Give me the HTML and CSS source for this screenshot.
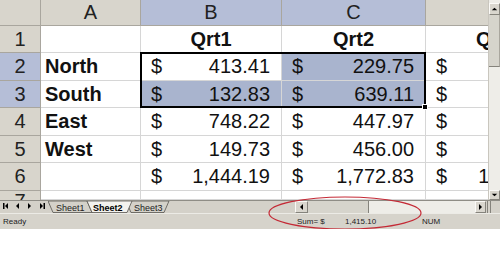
FILE: index.html
```html
<!DOCTYPE html>
<html lang="en">
<head>
    <meta charset="UTF-8">
    <title>Book1 - Sheet2</title>
    <link rel="stylesheet" href="styles.css">
</head>
<body>
    <div class="app">
        <div class="sheet">
            <div class="grid-clip">
                <div class="grid">
                    <div class="hd"></div>
                    <div class="hd">A</div>
                    <div class="hd sel">B</div>
                    <div class="hd sel">C</div>
                    <div class="hd">D</div>

                    <div class="rh">1</div>
                    <div class="cell"></div>
                    <div class="cell title">Qrt1</div>
                    <div class="cell title">Qrt2</div>
                    <div class="cell title">Qrt3</div>

                    <div class="rh sel">2</div>
                    <div class="cell label">North</div>
                    <div class="cell money"><span>$</span><span>413.41</span></div>
                    <div class="cell money picked"><span>$</span><span>229.75</span></div>
                    <div class="cell money"><span>$</span><span>318.60</span></div>

                    <div class="rh sel">3</div>
                    <div class="cell label">South</div>
                    <div class="cell money picked"><span>$</span><span>132.83</span></div>
                    <div class="cell money picked"><span>$</span><span>639.11</span></div>
                    <div class="cell money"><span>$</span><span>402.15</span></div>

                    <div class="rh">4</div>
                    <div class="cell label">East</div>
                    <div class="cell money"><span>$</span><span>748.22</span></div>
                    <div class="cell money"><span>$</span><span>447.97</span></div>
                    <div class="cell money"><span>$</span><span>521.40</span></div>

                    <div class="rh">5</div>
                    <div class="cell label">West</div>
                    <div class="cell money"><span>$</span><span>149.73</span></div>
                    <div class="cell money"><span>$</span><span>456.00</span></div>
                    <div class="cell money"><span>$</span><span>287.35</span></div>

                    <div class="rh">6</div>
                    <div class="cell"></div>
                    <div class="cell money"><span>$</span><span>1,444.19</span></div>
                    <div class="cell money"><span>$</span><span>1,772.83</span></div>
                    <div class="cell money"><span>$</span><span>1,529.50</span></div>

                    <div class="rh partial">7</div>
                    <div class="cell"></div>
                    <div class="cell"></div>
                    <div class="cell"></div>
                    <div class="cell"></div>

                    <div class="selection"></div>
                </div>
            </div>
            <div class="vscroll">
                <div class="sbtn up">
                    <svg width="10" height="10" viewBox="0 0 10 10"><polygon points="2,6.5 8,6.5 5,3.5" fill="#000"/></svg>
                </div>
                <div class="vthumb"></div>
                <div class="track"></div>
                <div class="sbtn down">
                    <svg width="10" height="8" viewBox="0 0 10 8"><polygon points="2,2.5 8,2.5 5,5.5" fill="#000"/></svg>
                </div>
            </div>
        </div>

        <div class="tabbar">
            <svg class="tabnav" width="48" height="12" viewBox="0 0 48 12">
                <rect x="3" y="2" width="1.5" height="6" fill="#000"/>
                <polygon points="8,2 8,8 5,5" fill="#000"/>
                <polygon points="19,2 19,8 16,5" fill="#000"/>
                <polygon points="28,2 28,8 31,5" fill="#000"/>
                <polygon points="40,2 40,8 43,5" fill="#000"/>
                <rect x="43.5" y="2" width="1.5" height="6" fill="#000"/>
            </svg>
            <svg class="tabs" width="247" height="12" viewBox="0 0 247 12">
                <polygon points="0,0 5,11.5 44,11.5 39,0" fill="#d4d1c9" stroke="#55534e" stroke-width="0.8"/>
                <polygon points="78,0 83,11.5 116,11.5 121,0" fill="#d4d1c9" stroke="#55534e" stroke-width="0.8"/>
                <polygon points="39,0 44,11.5 79,11.5 84,0" fill="#f3f2ee" stroke="#55534e" stroke-width="0.8"/>
                <text x="8" y="9.5" class="tab-text">Sheet1</text>
                <text x="45" y="9.5" class="tab-text active">Sheet2</text>
                <text x="86" y="9.5" class="tab-text">Sheet3</text>
            </svg>
            <div class="hscroll">
                <div class="sbtn left">
                    <svg width="11" height="10" viewBox="0 0 11 10"><polygon points="7,2 7,8 4,5" fill="#000"/></svg>
                </div>
                <div class="hthumb"></div>
                <div class="track"></div>
                <div class="sbtn right">
                    <svg width="9" height="10" viewBox="0 0 9 10"><polygon points="3,2 3,8 6,5" fill="#000"/></svg>
                </div>
            </div>
            <div class="split"></div>
            <div class="grip"></div>
        </div>

        <div class="status">
            <span class="ready">Ready</span>
            <span class="sum"><span class="sum-label">Sum= $</span>1,415.10</span>
            <span class="num">NUM</span>
        </div>

        <svg class="callout" width="160" height="40" viewBox="0 0 160 40">
            <ellipse cx="79" cy="18" rx="76" ry="16" fill="none" stroke="#c42a36" stroke-width="1.2"/>
        </svg>
    </div>
</body>
</html>
```

FILE: styles.css
```css
/* Page */
body {
    margin: 0;
    background: #ffffff;
    font-family: 'Liberation Sans', Arial, sans-serif;
    color: #111;
}

.app {
    position: relative;
    width: 500px;
}

/* Sheet area */
.sheet {
    display: flex;
    height: 200px;
}

.grid-clip {
    width: 488px;
    overflow: hidden;
}

.grid {
    position: relative;
    display: grid;
    width: max-content;
    grid-template-columns: 41px 100px 141px 144px 142px;
    grid-template-rows: 26px 27px 28px 27px 28px 27px 28px 9px;
    font-size: 20px;
}

.grid > div {
    box-sizing: border-box;
}

/* Headers */
.hd,
.rh {
    background: #d8d5cc;
    border-right: 1px solid #a9a69e;
    border-bottom: 1px solid #a9a69e;
    display: flex;
    align-items: center;
    justify-content: center;
    color: #222;
}

.hd.sel,
.rh.sel {
    background: #b5bed7;
}

/* last row is only partly on screen */
.rh.partial {
    display: block;
    text-align: center;
    overflow: hidden;
    line-height: 20px;
    border-bottom: none;
}

/* Cells */
.cell {
    border-right: 1px solid #d6d6d6;
    border-bottom: 1px solid #d6d6d6;
    display: flex;
    align-items: center;
    white-space: nowrap;
}

.title {
    justify-content: center;
    font-weight: bold;
}

.label {
    font-weight: bold;
    padding-left: 4px;
}

.money {
    justify-content: space-between;
    padding: 0 11px 0 10px;
}

.picked {
    background: #a9b4ce;
}

/* Selection B2:C3, drawn over the cells */
.selection {
    position: absolute;
    grid-row: 3 / 5;
    grid-column: 3 / 5;
    top: -1px;
    left: -1px;
    right: 0;
    bottom: 0;
    border: 2px solid #000;
}

.selection::after {
    content: "";
    position: absolute;
    right: -4px;
    bottom: -4px;
    width: 4px;
    height: 4px;
    background: #000;
    border: 1px solid #fff;
}

/* Scrollbars */
.vscroll {
    width: 12px;
    background: #eeede8;
    display: flex;
    flex-direction: column;
    padding-top: 3px;
    box-sizing: border-box;
    border-left: 1px solid #c9c6be;
}

.sbtn {
    box-sizing: border-box;
    background: #d9d6ce;
    border: 1px solid;
    border-color: #fbfaf7 #85837c #85837c #fbfaf7;
    display: flex;
    align-items: center;
    justify-content: center;
}

.sbtn svg {
    display: block;
}

.vscroll .up {
    height: 12px;
}

.vscroll .down {
    height: 10px;
}

.vthumb {
    height: 51px;
    background: #d6d4cc;
    border-bottom: 1px solid #85837c;
    border-right: 1px solid #a9a69e;
}

.track {
    flex: 1;
}

/* Tab bar */
.tabbar {
    display: flex;
    height: 13px;
    box-sizing: border-box;
    background: #d4d1c9;
    border-top: 1px solid #8f8d86;
}

.tabnav,
.tabs {
    display: block;
    flex: none;
}

.tab-text {
    font-family: 'Liberation Sans', Arial, sans-serif;
    font-size: 9px;
    fill: #222;
}

.tab-text.active {
    font-weight: bold;
    fill: #000;
}

.hscroll {
    width: 191px;
    display: flex;
    background: #eeede8;
}

.hscroll .left {
    width: 13px;
}

.hscroll .right {
    width: 11px;
}

.hthumb {
    width: 60px;
    background: #d6d4cc;
    border-right: 1px solid #85837c;
}

.split {
    width: 2px;
    margin-left: 1px;
    border-left: 1px solid #85837c;
    border-right: 1px solid #85837c;
}

.grip {
    flex: 1;
}

/* Status bar */
.status {
    display: flex;
    align-items: center;
    height: 15px;
    background: #d6d3cb;
    border-top: 1px solid #ecebe6;
    font-size: 8px;
    color: #222;
}

.ready {
    width: 294px;
    padding-left: 3px;
}

.sum {
    width: 125px;
}

.sum-label {
    display: inline-block;
    width: 48px;
}

/* Annotation ring */
.callout {
    position: absolute;
    left: 266px;
    top: 195px;
}
```
